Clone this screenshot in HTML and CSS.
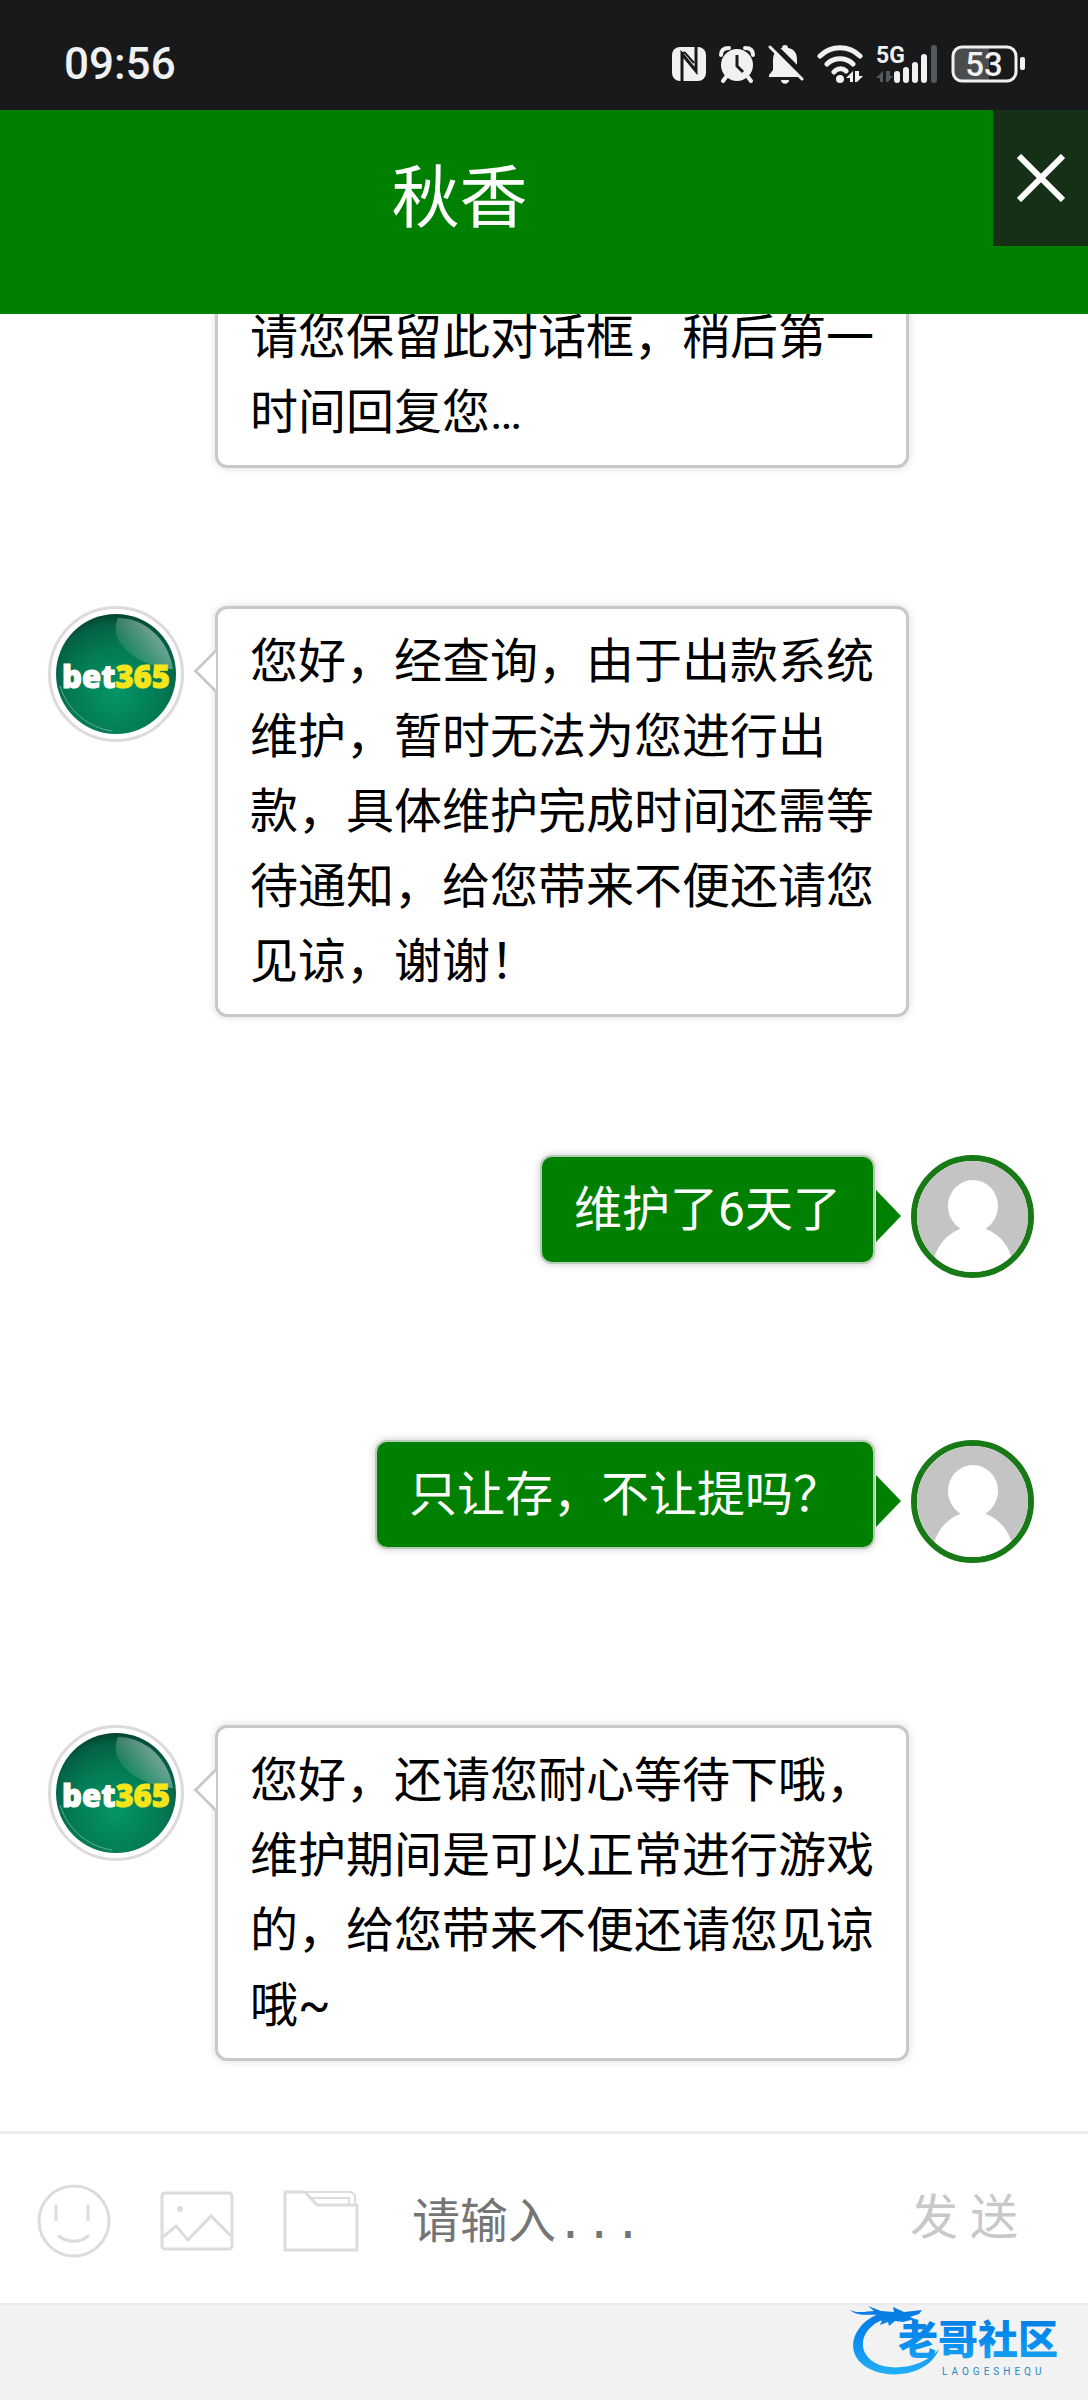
FILE: index.html
```html
<!DOCTYPE html>
<html lang="zh-CN">
<head>
    <meta charset="UTF-8" />
    <meta name="viewport" content="width=device-width, initial-scale=1.0"/>
    <title>秋香</title>
    <link rel="stylesheet" href="styles.css">
</head>
<body>

    <!-- Shared drawings -->
    <svg class="defs" width="0" height="0" aria-hidden="true">
        <defs>
            <radialGradient id="ball" cx="50%" cy="66%" r="68%">
                <stop offset="0" stop-color="#049566"/>
                <stop offset="0.55" stop-color="#037a54"/>
                <stop offset="0.85" stop-color="#046044"/>
                <stop offset="1" stop-color="#033c2a"/>
            </radialGradient>
            <linearGradient id="shine" x1="1" y1="0.2" x2="0.2" y2="0.8">
                <stop offset="0" stop-color="#fff" stop-opacity="0.6"/>
                <stop offset="1" stop-color="#fff" stop-opacity="0.05"/>
            </linearGradient>
            <symbol id="agent" viewBox="0 0 120 120">
                <circle cx="60" cy="60" r="60" fill="url(#ball)"/>
                <path d="M62 4C88 4 112 24 117 55C96 54 66 42 60 20C59 13 60 8 62 4Z" fill="url(#shine)"/>
                <path d="M4 72C12 98 34 114 56 117" fill="none" stroke="#5fae92" stroke-width="1"/>
                <text x="60" y="74" text-anchor="middle" class="logo-text"><tspan class="logo-bet">bet</tspan><tspan class="logo-365">365</tspan></text>
            </symbol>
            <symbol id="visitor" viewBox="0 0 112 112">
                <rect width="112" height="112" fill="#c5c4c4"/>
                <ellipse cx="56" cy="45" rx="25" ry="26" fill="#fff"/>
                <path d="M43 64H69V68C84 74 93 86 97 104V112H15V104C19 86 28 74 43 68Z" fill="#fff"/>
            </symbol>
        </defs>
    </svg>

    <!-- Phone status bar -->
    <div class="status-bar">
        <span class="time">09:56</span>
        <div class="status-icons">
            <svg width="34" height="36" viewBox="0 0 34 36">
                <rect x="0" y="1" width="34" height="34" rx="8" fill="#f0f1f3"/>
                <path d="M10 35V8L24 25V1" fill="none" stroke="#17191b" stroke-width="3"/>
                <path d="M10 8C11 6 13 6 14 8L22 17" fill="none" stroke="#17191b" stroke-width="2"/>
            </svg>
            <svg width="36" height="38" viewBox="0 0 36 38">
                <circle cx="18" cy="20" r="16" fill="#f0f1f3"/>
                <path d="M2 10C2 5 5 3 10 3M34 10C34 5 31 3 26 3M7 32L4 36M29 32L32 36" fill="none" stroke="#f0f1f3" stroke-width="4" stroke-linecap="round"/>
                <path d="M18 10V21L24 27" fill="none" stroke="#17191b" stroke-width="3"/>
            </svg>
            <svg width="36" height="40" viewBox="0 0 36 40">
                <path d="M17 1C19 1 20 2 20 4C27 5 29 10 29 16V25L33 31V33H1V31L5 26V16C5 10 8 5 14 4C14 2 15 1 17 1Z" fill="#f0f1f3"/>
                <path d="M13 36H21C21 41 13 41 13 36Z" fill="#f0f1f3"/>
                <path d="M4 0L37 33" stroke="#17191b" stroke-width="6"/>
                <path d="M2 3L34 35" stroke="#f0f1f3" stroke-width="3" stroke-linecap="round"/>
            </svg>
            <svg width="46" height="38" viewBox="0 0 46 38">
                <path d="M3 11C14 0 32 0 43 11M10 19C17 12 29 12 36 19M17 27C20 23 26 23 29 26" fill="none" stroke="#f0f1f3" stroke-width="5" stroke-linecap="round"/>
                <circle cx="23" cy="34" r="4" fill="#f0f1f3"/>
                <path d="M36 37V26L29 33H33V37ZM38 26V37H40L46 31H42V26Z" fill="#f0f1f3"/>
            </svg>
            <svg width="62" height="54" viewBox="0 -8 62 54">
                <text x="0" y="18" class="network">5G</text>
                <path d="M7 37V26L0 33H4V37ZM10 26V37H12L17 31H14V26Z" fill="#55585a"/>
                <path d="M21 29V35M30 25V35M39 20V35M48 12V35" stroke="#f0f1f3" stroke-width="6" stroke-linecap="round"/>
                <path d="M58 3V35" stroke="#55585a" stroke-width="6" stroke-linecap="round"/>
            </svg>
            <svg width="75" height="38" viewBox="0 0 75 38">
                <path d="M38 3V35H12C6 35 3 31 3 26V12C3 7 6 3 12 3Z" fill="#4a4c4e"/>
                <rect x="2" y="2" width="63" height="34" rx="9" fill="none" stroke="#f0f1f3" stroke-width="3"/>
                <rect x="69" y="12" width="5" height="13" rx="2" fill="#f0f1f3"/>
                <text x="33" y="31" text-anchor="middle" class="battery">53</text>
            </svg>
        </div>
    </div>

    <!-- Chat header -->
    <header class="chat-header">
        <h1>秋香</h1>
        <button class="close" type="button" aria-label="关闭">
            <svg width="48" height="48" viewBox="0 0 48 48"><path d="M2 2L46 46M46 2L2 46" stroke="#fff" stroke-width="6"/></svg>
        </button>
    </header>

    <!-- Messages -->
    <main class="messages">
        <div class="message continued">
            <p class="bubble">请您保留此对话框，稍后第一时间回复您…</p>
        </div>

        <div class="message">
            <div class="avatar"><svg width="120" height="120" role="img" aria-label="bet365"><use href="#agent"/></svg></div>
            <p class="bubble">您好，经查询，由于出款系统维护，暂时无法为您进行出款，具体维护完成时间还需等待通知，给您带来不便还请您见谅，谢谢！</p>
        </div>

        <div class="message mine">
            <p class="bubble">维护了6天了</p>
            <div class="avatar"><svg width="112" height="112"><use href="#visitor"/></svg></div>
        </div>

        <div class="message mine">
            <p class="bubble">只让存，不让提吗？</p>
            <div class="avatar"><svg width="112" height="112"><use href="#visitor"/></svg></div>
        </div>

        <div class="message">
            <div class="avatar"><svg width="120" height="120" role="img" aria-label="bet365"><use href="#agent"/></svg></div>
            <p class="bubble">您好，还请您耐心等待下哦，维护期间是可以正常进行游戏的，给您带来不便还请您见谅哦~</p>
        </div>
    </main>

    <!-- Composer -->
    <form class="composer">
        <button type="button" aria-label="表情">
            <svg width="74" height="74" viewBox="0 0 74 74" fill="none" stroke="#dcdcdc" stroke-width="3" stroke-linecap="round">
                <circle cx="37" cy="37" r="35"/>
                <path d="M19 22V36M51 22V36M22 52C30 59 43 59 51 52"/>
            </svg>
        </button>
        <button type="button" aria-label="图片">
            <svg width="74" height="60" viewBox="0 0 74 60" fill="none" stroke="#dcdcdc" stroke-width="3">
                <rect x="2" y="2" width="70" height="56" rx="3"/>
                <path d="M3 46L16 35L28 49L51 25L71 45"/>
                <circle cx="20" cy="18" r="3" fill="#dcdcdc" stroke="none"/>
            </svg>
        </button>
        <button type="button" aria-label="文件">
            <svg width="76" height="62" viewBox="0 0 76 62" fill="none" stroke="#dcdcdc" stroke-width="3">
                <path d="M2 2H22L34 15H74V60H2Z"/>
                <path d="M22 2H68L72 5V15M28 8H66V14" stroke-width="2"/>
            </svg>
        </button>
        <input type="text" placeholder="请输入..." aria-label="请输入">
        <button class="send" type="submit">发 送</button>
    </form>

    <!-- Community mark -->
    <footer class="footer">
        <svg width="224" height="80" viewBox="0 0 224 80" role="img" aria-label="老哥社区">
            <defs>
                <linearGradient id="blue" x1="0" y1="0" x2="0" y2="74" gradientUnits="userSpaceOnUse">
                    <stop offset="0" stop-color="#0878df"/>
                    <stop offset="0.45" stop-color="#078bee"/>
                    <stop offset="1" stop-color="#27b4f7"/>
                </linearGradient>
            </defs>
            <path d="M31 8C5 17-4 42 9 56C26 76 77 75 89 44C76 61 41 69 22 56C5 43 13 21 35 14Z" fill="url(#blue)"/>
            <path d="M0 5C9 9 17 6 24 6L18 1L31 6L44 7L43 2L54 7L72 5L69 9L60 12L69 16L61 15L53 17L45 16L39 21L38 17L30 20L32 15L24 16L29 10C20 9 8 12 0 5Z" fill="url(#blue)"/>
            <text x="48" y="49" class="mark">老哥社区</text>
            <text x="92" y="70" class="mark-latin">LAOGESHEQU</text>
        </svg>
    </footer>

</body>
</html>
```
FILE: styles.css
```css
:root {
    --green: #008000;
    --line: #c8c8c8; /* Bubble border */
    --status: #17191b;
    --footer: #f2f2f2;
}

* {
    box-sizing: border-box;
}

body {
    margin: 0;
    height: 100vh;
    display: flex;
    flex-direction: column;
    background: #fff;
    color: #000;
    font-family: Roboto, "Noto Sans CJK SC", sans-serif;
    font-size: 48px;
}

button {
    padding: 0;
    border: none;
    background: none;
    color: inherit;
    font: inherit;
    cursor: pointer;
}

svg {
    display: block;
    flex-shrink: 0;
}

.defs {
    position: absolute;
}

/* Status bar */
.status-bar {
    display: flex;
    justify-content: space-between;
    align-items: center;
    height: 110px;
    padding: 18px 62px 0 64px;
    background: var(--status);
    color: #f0f1f3;
}

.time {
    font-size: 44px;
    font-weight: 500;
}

.status-icons {
    display: flex;
    align-items: center;
    gap: 13px;
}

.network {
    font-size: 23px;
    font-weight: 700;
    fill: #f0f1f3;
}

.battery {
    font-size: 33px;
    font-weight: 500;
    fill: #f0f1f3;
}

/* Header */
.chat-header {
    display: flex;
    height: 204px;
    flex-shrink: 0;
    background: var(--green);
    color: #fff;
}

.chat-header h1 {
    flex: 1;
    margin: 0 74px 0 0;
    font-size: 68px;
    font-weight: 400;
    line-height: 178px;
    text-align: center;
}

.close {
    display: flex;
    justify-content: center;
    align-items: center;
    width: 95px;
    height: 136px;
    background: #163018;
}

/* Message list keeps the newest message at the bottom */
.messages {
    flex: 1;
    min-height: 0;
    display: flex;
    flex-direction: column;
    justify-content: flex-end;
    gap: 138px;
    padding: 0 54px 70px 48px;
    overflow: hidden;
}

.message {
    display: flex;
    align-items: flex-start;
    gap: 31px;
    padding-right: 125px;
}

.message.continued {
    padding-left: 167px;
}

.bubble {
    position: relative;
    margin: 0;
    padding: 15px 32px;
    border: 3px solid var(--line);
    border-radius: 12px;
    background: #fff;
    box-shadow: 0 0 8px rgba(0, 0, 0, 0.15);
    line-height: 75px;
}

.avatar {
    display: flex;
    justify-content: center;
    align-items: center;
    flex-shrink: 0;
    width: 136px;
    height: 136px;
    border: 3px solid #dedada;
    border-radius: 50%;
    overflow: hidden;
}

/* Bubble arrow */
.avatar + .bubble::before {
    content: "";
    position: absolute;
    top: 46px;
    left: -18px;
    width: 29px;
    height: 29px;
    border: solid var(--line);
    border-width: 0 0 3px 3px;
    background: #fff;
    transform: rotate(45deg);
    clip-path: polygon(0 0, 100% 100%, 0 100%);
}

/* Own messages */
.message.mine {
    justify-content: flex-end;
    gap: 36px;
    padding: 0 0 24px;
}

.mine .bubble {
    border: 2px solid #b4ccb4;
    background: var(--green);
    color: #fff;
    box-shadow: 0 0 8px rgba(0, 0, 0, 0.2);
}

.mine .bubble::after {
    content: "";
    position: absolute;
    top: 33px;
    right: -28px;
    border: solid transparent;
    border-width: 26px 0 26px 25px;
    border-left-color: var(--green);
}

.mine .avatar {
    width: 123px;
    height: 123px;
    border: 6px solid #177a17;
}

.logo-text {
    font-family: "Open Sans", sans-serif;
    font-size: 31px;
    font-weight: 800;
}

.logo-bet {
    fill: #fff;
    stroke: #fff;
}

.logo-365 {
    fill: #f7e51b;
    stroke: #f7e51b;
}

/* Composer */
.composer {
    display: flex;
    align-items: center;
    flex-shrink: 0;
    gap: 49px;
    height: 172px;
    padding: 4px 70px 0 37px;
    border-top: 3px solid #ececec;
}

.composer input {
    flex: 1;
    min-width: 0;
    margin-left: 4px;
    padding: 8px 0 0;
    border: none;
    outline: none;
    background: none;
    font-family: "Liberation Mono", "Noto Sans CJK SC", monospace;
    font-size: 48px;
}

.composer input::placeholder {
    color: #757575;
}

.send {
    padding-bottom: 16px;
    color: #c8c8c8;
}

/* Footer */
.footer {
    display: flex;
    justify-content: flex-end;
    flex-shrink: 0;
    height: 97px;
    padding-right: 14px;
    border-top: 2px solid #eaeaea;
    background: var(--footer);
}

.mark {
    font-family: "Noto Sans CJK SC", sans-serif;
    font-size: 40px;
    font-weight: 900;
    fill: url(#blue);
}

.mark-latin {
    font-size: 10px;
    letter-spacing: 4px;
    fill: #2a86c8;
}
```
